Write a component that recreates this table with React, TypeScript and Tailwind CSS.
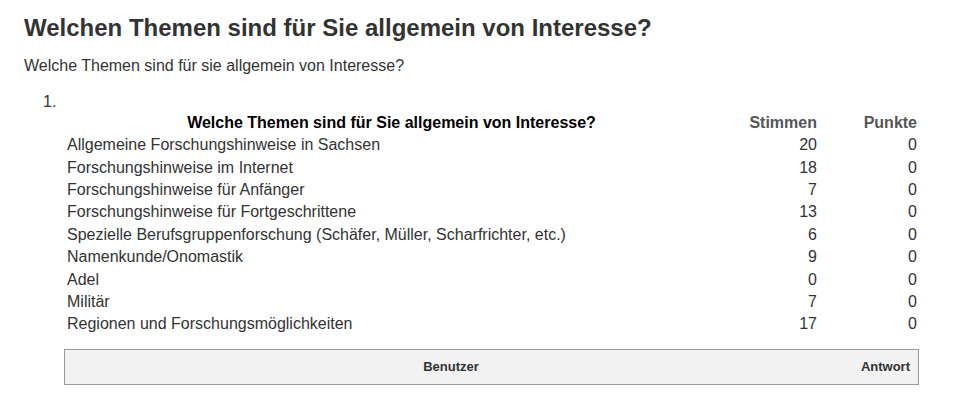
import React from "react";

const rows: [string, number, number][] = [
  ["Allgemeine Forschungshinweise in Sachsen", 20, 0],
  ["Forschungshinweise im Internet", 18, 0],
  ["Forschungshinweise für Anfänger", 7, 0],
  ["Forschungshinweise für Fortgeschrittene", 13, 0],
  ["Spezielle Berufsgruppenforschung (Schäfer, Müller, Scharfrichter, etc.)", 6, 0],
  ["Namenkunde/Onomastik", 9, 0],
  ["Adel", 0, 0],
  ["Militär", 7, 0],
  ["Regionen und Forschungsmöglichkeiten", 17, 0],
];

export default function App() {
  return (
    <div className="w-[955px] h-[412px] bg-white text-[#333] font-['Liberation_Sans',Arial,sans-serif] overflow-hidden">
      <div className="pl-[24px] pr-[36px]">
        <h1 className="pt-[14px] h-[46px] text-[24px] leading-[28px] font-bold text-[#333]">
          Welchen Themen sind für Sie allgemein von Interesse?
        </h1>
        <p className="mt-[10px] text-[16px] leading-[20px]">Welche Themen sind für sie allgemein von Interesse?</p>
        <div className="mt-[16px] text-[16px]">
          <div className="h-[20px] leading-[20px] pl-[19px]">1.</div>
          <div className="ml-[40px] w-[855px]">
            <div className="flex h-[22px] items-center text-[16px] font-bold">
              <div className="w-[655px] text-center text-black">Welche Themen sind für Sie allgemein von Interesse?</div>
              <div className="w-[100px] text-right pr-[2px] text-[#555]">Stimmen</div>
              <div className="w-[100px] text-right pr-[2px] text-[#555]">Punkte</div>
            </div>
            {rows.map(([t, s, p]) => (
              <div key={t} className="flex h-[22.4px] items-center text-[16px] text-[#333]">
                <div className="w-[655px] pl-[3px]">{t}</div>
                <div className="w-[100px] text-right pr-[2px]">{s}</div>
                <div className="w-[100px] text-right pr-[2px]">{p}</div>
              </div>
            ))}
            <div className="mt-[13px] flex h-[36px] items-center border border-[#999] bg-[#f2f2f2] text-[13px] font-bold text-[#333]">
              <div className="flex-1 text-center pr-[24px]">Benutzer</div>
              <div className="pr-[8px]">Antwort</div>
            </div>
          </div>
        </div>
      </div>
    </div>
  );
}
